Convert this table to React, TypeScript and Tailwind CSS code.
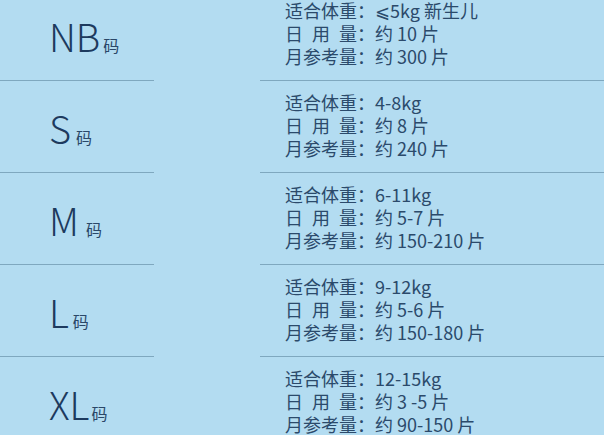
import React from "react";

type Row = { size: string; gap: string; weight: string; daily: string; monthly: string };

const rows: Row[] = [
  { size: "NB", gap: "ml-[3px]", weight: "⩽5kg 新生儿", daily: "约 10 片", monthly: "约 300 片" },
  { size: "S", gap: "ml-[5px]", weight: "4-8kg", daily: "约 8 片", monthly: "约 240 片" },
  { size: "M", gap: "ml-[7px]", weight: "6-11kg", daily: "约 5-7 片", monthly: "约 150-210 片" },
  { size: "L", gap: "ml-[4px]", weight: "9-12kg", daily: "约 5-6 片", monthly: "约 150-180 片" },
  { size: "XL", gap: "ml-[2px]", weight: "12-15kg", daily: "约 3 -5 片", monthly: "约 90-150 片" },
];

function Label({ children }: { children: React.ReactNode }) {
  return <span className="inline-block w-[72px]">{children}</span>;
}

export default function App() {
  return (
    <div
      className="w-[604px] h-[435px] overflow-hidden bg-[#b3dcf1]"
      style={{ fontFamily: '"Noto Sans CJK SC", "Noto Sans", sans-serif' }}
    >
      <div className="-mt-[11px]">
        {rows.map((r) => (
          <div key={r.size} className="flex h-[92px]">
            <div className="w-[154px] border-b border-[#7fa8bf] flex items-center pl-[49px] pt-[2px]">
              <span className="text-[38px] leading-none font-light text-[#1d3a5e]">{r.size}</span>
              <span className={`${r.gap} self-center mt-[18px] text-[16px] leading-none text-[#2a4768]`}>码</span>
            </div>
            <div className="w-[106px]" />
            <div className="flex-1 border-b border-[#7fa8bf] flex flex-col justify-center pl-[25px] pb-[2px] text-[18px] leading-[23px] text-[#2b4a6b]">
              <div className="flex">
                <Label>适合体重</Label>
                <span>：</span>
                <span>{r.weight}</span>
              </div>
              <div className="flex">
                <span className="w-[72px] flex justify-between">
                  <span>日</span>
                  <span>用</span>
                  <span>量</span>
                </span>
                <span>：</span>
                <span>{r.daily}</span>
              </div>
              <div className="flex">
                <Label>月参考量</Label>
                <span>：</span>
                <span>{r.monthly}</span>
              </div>
            </div>
          </div>
        ))}
      </div>
    </div>
  );
}
